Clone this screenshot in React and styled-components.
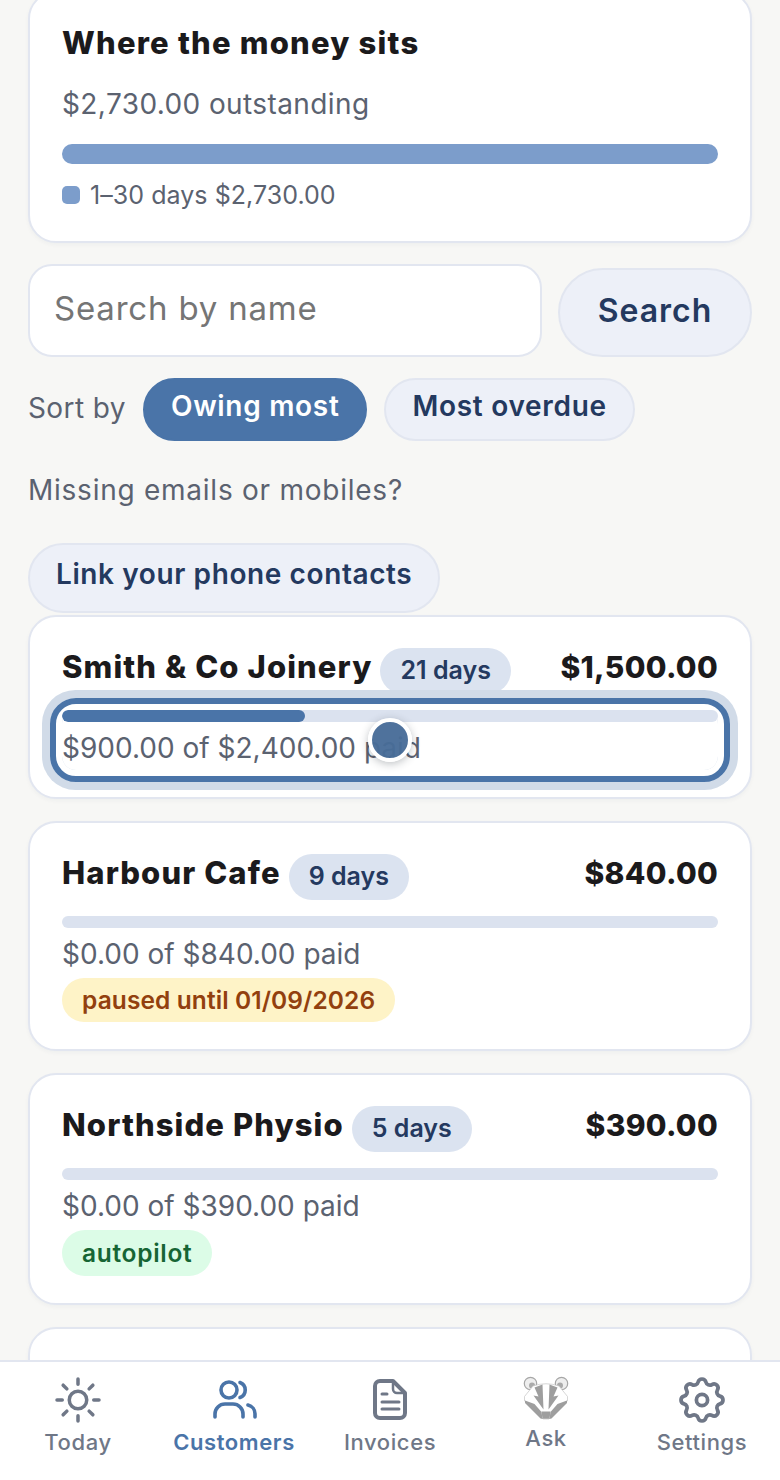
import React from "react";
import styled, { createGlobalStyle } from "styled-components";

const GlobalStyle = createGlobalStyle`
    html, body {
        margin: 0;
        padding: 0;
        background: #f7f7f5;
    }
    * {
        box-sizing: border-box;
    }
`;

const customers = [
    { name: "Smith & Co Joinery", days: "21 days", owing: "$1,500.00", paid: "$900.00 of $2,400.00 paid", pct: 37, focused: true },
    { name: "Harbour Cafe", days: "9 days", owing: "$840.00", paid: "$0.00 of $840.00 paid", tag: "paused until 01/09/2026", tone: "amber" },
    { name: "Northside Physio", days: "5 days", owing: "$390.00", paid: "$0.00 of $390.00 paid", tag: "autopilot", tone: "green" },
];

function SunIcon() {
    return (
        <svg width="56" height="56" viewBox="0 0 24 24" fill="none" stroke="currentColor" strokeWidth="1.5" strokeLinecap="round">
            <path d="M12 3v2.25m6.364.386-1.591 1.591M21 12h-2.25m-.386 6.364-1.591-1.591M12 18.75V21m-4.773-4.227-1.591 1.591M5.25 12H3m4.227-4.773L5.636 5.636M15.75 12a3.75 3.75 0 1 1-7.5 0 3.75 3.75 0 0 1 7.5 0Z" />
        </svg>
    );
}

function UsersIcon() {
    return (
        <svg width="56" height="56" viewBox="0 0 56 56" fill="none" stroke="currentColor" strokeWidth="3.6" strokeLinecap="round">
            <circle cx="23" cy="18" r="8" />
            <path d="M34 10.5a8 8 0 0 1 0 15" />
            <path d="M9 45v-3a10 10 0 0 1 10-10h8a10 10 0 0 1 10 10v3" />
            <path d="M42 33a9 9 0 0 1 7 9v3" />
        </svg>
    );
}

function DocIcon() {
    return (
        <svg width="56" height="56" viewBox="0 0 56 56" fill="none" stroke="currentColor" strokeWidth="4" strokeLinecap="round" strokeLinejoin="round">
            <path d="M18 9h13l12 12v20a5 5 0 0 1-5 5H18a5 5 0 0 1-5-5V14a5 5 0 0 1 5-5z" />
            <path d="M31 10v7a4 4 0 0 0 4 4h7" strokeWidth="2.5" />
            <path d="M20 22h5M20 30h17M20 37h17" strokeWidth="3" />
        </svg>
    );
}

function BadgerIcon() {
    return (
        <svg width="60" height="52" viewBox="0 0 60 52">
            <circle cx="14.500" cy="11.500" r="6.200" fill="#eee" stroke="#a6a6a6" strokeWidth="1.200" />
            <circle cx="45.500" cy="11.500" r="6.200" fill="#eee" stroke="#a6a6a6" strokeWidth="1.200" />
            <circle cx="16" cy="13.500" r="3" fill="#ababab" />
            <circle cx="44" cy="13.500" r="3" fill="#ababab" />
            <path d="M17 14Q30 9.500 43 14L51.500 24.500 51.500 29 33 47H27L8.500 29 8.500 24.500z" fill="#fff" stroke="#c4c4c4" strokeWidth="0.7" />
            <path d="M18.500 15.500 26.500 12.500 27.500 37.500 17.500 23.500 22.500 24.500z" fill="#9e9e9e" />
            <path d="M41.500 15.500 33.500 12.500 32.500 37.500 42.500 23.500 37.500 24.500z" fill="#9e9e9e" />
            <path d="M9 28.500 18.500 32 25.500 40 26.500 47 24.500 46.500 9 31z" fill="#9e9e9e" />
            <path d="M51 28.500 41.500 32 34.500 40 33.500 47 35.500 46.500 51 31z" fill="#9e9e9e" />
            <path d="M25.500 39.500H34.500L33.500 46.800H26.500z" fill="#9e9e9e" />
        </svg>
    );
}

function GearIcon() {
    return (
        <svg width="56" height="56" viewBox="0 0 24 24" fill="none" stroke="currentColor" strokeWidth="1.6" strokeLinecap="round" strokeLinejoin="round">
            <path d="M10.325 4.317c.426-1.756 2.924-1.756 3.35 0a1.724 1.724 0 002.573 1.066c1.543-.94 3.31.826 2.37 2.37a1.724 1.724 0 001.065 2.572c1.756.426 1.756 2.924 0 3.35a1.724 1.724 0 00-1.066 2.573c.94 1.543-.826 3.31-2.37 2.37a1.724 1.724 0 00-2.572 1.065c-.426 1.756-2.924 1.756-3.35 0a1.724 1.724 0 00-2.573-1.066c-1.543.94-3.31-.826-2.37-2.37a1.724 1.724 0 00-1.065-2.572c-1.756-.426-1.756-2.924 0-3.35a1.724 1.724 0 001.066-2.573c-.94-1.543.826-3.31 2.37-2.37.996.608 2.296.07 2.572-1.065z" />
            <circle cx="12" cy="12" r="2.4" />
        </svg>
    );
}

function CustomerCard({ customer }) {
    return (
        <Card>
            <NameRow>
                <NameGroup>
                    <Name>{customer.name}</Name>
                    <DaysPill>{customer.days}</DaysPill>
                </NameGroup>
                <Owing>{customer.owing}</Owing>
            </NameRow>
            <PaidBlock $focused={customer.focused}>
                <Track>
                    <Fill style={{ width: `${customer.pct || 0}%` }} />
                </Track>
                <PaidText>{customer.paid}</PaidText>
                {customer.focused && <TouchDot />}
            </PaidBlock>
            {customer.tag && <Tag $tone={customer.tone}>{customer.tag}</Tag>}
        </Card>
    );
}

function App() {
    return (
        <Page>
            <GlobalStyle />
            <Scroller>
                <Content>
                    <SummaryCard>
                        <Title>Where the money sits</Title>
                        <Outstanding>$2,730.00 outstanding</Outstanding>
                        <SummaryBar />
                        <Legend>
                            <LegendDot />
                            1–30 days $2,730.00
                        </Legend>
                    </SummaryCard>
                    <SearchRow>
                        <SearchInput placeholder="Search by name" />
                        <SearchButton>Search</SearchButton>
                    </SearchRow>
                    <SortRow>
                        <SortLabel>Sort by</SortLabel>
                        <SortChip $active>Owing most</SortChip>
                        <SortChip>Most overdue</SortChip>
                    </SortRow>
                    <Missing>Missing emails or mobiles?</Missing>
                    <LinkChip>Link your phone contacts</LinkChip>
                    <CardList>
                        {customers.map((c) => (
                            <CustomerCard key={c.name} customer={c} />
                        ))}
                        <EmptyCard />
                    </CardList>
                </Content>
            </Scroller>
            <Nav>
                <NavItem><SunIcon /><NavLabel>Today</NavLabel></NavItem>
                <NavItem $active><UsersIcon /><NavLabel $active>Customers</NavLabel></NavItem>
                <NavItem><DocIcon /><NavLabel>Invoices</NavLabel></NavItem>
                <NavItem><BadgerIcon /><NavLabel>Ask</NavLabel></NavItem>
                <NavItem><GearIcon /><NavLabel>Settings</NavLabel></NavItem>
            </Nav>
        </Page>
    );
}

export default App;

const Page = styled.div`
    width: 780px;
    height: 1480px;
    display: flex;
    flex-direction: column;
    overflow: hidden;
    background: #f7f7f5;
    font-family: "Inter", "Liberation Sans", sans-serif;
`;

const Scroller = styled.div`
    flex: 1;
    min-height: 0;
    overflow: hidden;
`;

const Content = styled.div`
    display: flex;
    flex-direction: column;
    align-items: flex-start;
    padding: 0 28px;
    margin-top: -9px;
`;

const Card = styled.div`
    width: 100%;
    background: #fff;
    border: 2px solid #e2e6f0;
    border-radius: 28px;
    padding: 31px 32px 27px;
    box-shadow: 0 2px 4px rgba(30, 40, 70, 0.04);
`;

const SummaryCard = styled(Card)`
    height: 252px;
`;

const EmptyCard = styled(Card)`
    height: 120px;
    flex-shrink: 0;
`;

const Title = styled.h2`
    margin: 0;
    height: 38px;
    line-height: 38px;
    font-size: 31px;
    font-weight: 800;
    letter-spacing: 1.2px;
    color: #1b1a1c;
`;

const Outstanding = styled.div`
    margin-top: 20px;
    height: 44px;
    line-height: 44px;
    font-size: 28px;
    font-weight: 400;
    letter-spacing: 0.4px;
    color: #5b6270;
`;

const SummaryBar = styled.div`
    margin-top: 18px;
    height: 20px;
    border-radius: 10px;
    background: #7c9dcb;
`;

const Legend = styled.div`
    margin-top: 11px;
    height: 40px;
    display: flex;
    align-items: center;
    gap: 10px;
    font-size: 25px;
    letter-spacing: 0.05px;
    color: #5b6270;
`;

const LegendDot = styled.span`
    width: 18px;
    height: 18px;
    border-radius: 5px;
    background: #7c9dcb;
`;

const SearchRow = styled.div`
    width: 100%;
    margin-top: 21px;
    display: flex;
    align-items: flex-end;
    gap: 16px;
`;

const SearchInput = styled.input`
    flex: 1;
    min-width: 0;
    height: 93px;
    padding: 0 24px 6px;
    background: #fff;
    border: 2px solid #e2e6f0;
    border-radius: 24px;
    font-family: inherit;
    font-size: 33px;
    letter-spacing: 0.8px;
    color: #1b1a1c;
    &::placeholder {
        color: #757575;
        opacity: 1;
    }
`;

const SearchButton = styled.button`
    width: 194px;
    height: 89px;
    padding: 0 0 4px;
    background: #edf0f8;
    border: 2px solid #e2e6f0;
    border-radius: 45px;
    font-family: inherit;
    font-size: 32px;
    font-weight: 600;
    letter-spacing: 1px;
    color: #24395f;
`;

const SortRow = styled.div`
    margin-top: 21px;
    display: flex;
    align-items: center;
    gap: 17px;
`;

const SortLabel = styled.span`
    padding-bottom: 4px;
    font-size: 28px;
    letter-spacing: 0.4px;
    color: #5b6270;
`;

const SortChip = styled.button`
    height: 63px;
    padding: 0 26px 7px;
    border-radius: 32px;
    border: 2px solid ${(p) => (p.$active ? "#4a74a8" : "#e2e6f0")};
    background: ${(p) => (p.$active ? "#4a74a8" : "#edf0f8")};
    color: ${(p) => (p.$active ? "#fff" : "#24395f")};
    font-family: inherit;
    font-size: 28px;
    font-weight: 600;
    letter-spacing: 0.7px;
`;

const Missing = styled.p`
    margin: 27px 0 0;
    height: 44px;
    line-height: 44px;
    font-size: 28px;
    letter-spacing: 0.75px;
    color: #5b6270;
`;

const LinkChip = styled.button`
    margin-top: 31px;
    height: 70px;
    padding: 0 26px 8px;
    background: #edf0f8;
    border: 2px solid #e2e6f0;
    border-radius: 36px;
    font-family: inherit;
    font-size: 28px;
    font-weight: 600;
    letter-spacing: 0.6px;
    color: #24395f;
`;

const CardList = styled.div`
    width: 100%;
    margin-top: 2px;
    display: flex;
    flex-direction: column;
    gap: 22px;
`;

const NameRow = styled.div`
    display: flex;
    align-items: center;
    justify-content: space-between;
    height: 46px;
`;

const NameGroup = styled.div`
    display: flex;
    align-items: center;
    gap: 8px;
`;

const Name = styled.span`
    padding-bottom: 8px;
    line-height: 36px;
    font-size: 31px;
    font-weight: 800;
    letter-spacing: 1.1px;
    color: #1b1a1c;
`;

const DaysPill = styled.span`
    height: 46px;
    padding: 0 20px 2px;
    display: flex;
    align-items: center;
    border-radius: 23px;
    background: #dbe3f0;
    font-size: 25px;
    font-weight: 600;
    color: #24395f;
`;

const Owing = styled.span`
    padding-bottom: 8px;
    line-height: 36px;
    font-size: 30px;
    font-weight: 800;
    letter-spacing: 0.3px;
    color: #1b1a1c;
`;

const PaidBlock = styled.div`
    position: relative;
    height: 60px;
    margin-top: 16px;
    ${(p) =>
        p.$focused &&
        `
        border-radius: 14px;
        outline: 6px solid #4a74a8;
        outline-offset: 6px;
        box-shadow: 0 0 0 12px #fff, 0 0 0 20px #d1dbe8;
    `}
`;

const Track = styled.div`
    height: 12px;
    border-radius: 6px;
    background: #dbe2ef;
    overflow: hidden;
`;

const Fill = styled.div`
    height: 100%;
    border-radius: 6px;
    background: #4a74a8;
`;

const PaidText = styled.div`
    margin-top: 8px;
    height: 36px;
    line-height: 36px;
    font-size: 28px;
    color: #5b6270;
`;

const TouchDot = styled.span`
    position: absolute;
    left: 50%;
    top: 8px;
    width: 44px;
    height: 44px;
    margin-left: -22px;
    border-radius: 50%;
    border: 4px solid #fff;
    background: rgba(72, 108, 152, 0.96);
    box-shadow: 0 2px 8px rgba(40, 50, 60, 0.3);
`;

const Tag = styled.div`
    display: flex;
    align-items: center;
    width: fit-content;
    margin-top: 2px;
    height: ${(p) => (p.$tone === "green" ? "46px" : "44px")};
    padding: 0 20px;
    border-radius: 23px;
    background: ${(p) => (p.$tone === "green" ? "#dcfce7" : "#fef3c7")};
    color: ${(p) => (p.$tone === "green" ? "#166534" : "#92400e")};
    font-size: 24.5px;
    font-weight: 600;
    letter-spacing: ${(p) => (p.$tone === "green" ? "0.7px" : "0.1px")};
`;

const Nav = styled.nav`
    flex-shrink: 0;
    height: 120px;
    background: #fff;
    border-top: 2px solid #e2e6f0;
    display: grid;
    grid-template-columns: repeat(5, 1fr);
    padding-top: 10px;
`;

const NavItem = styled.div`
    display: flex;
    flex-direction: column;
    align-items: center;
    color: ${(p) => (p.$active ? "#4a74a8" : "#6f7787")};
    svg {
        display: block;
    }
`;

const NavLabel = styled.span`
    margin-top: -1px;
    font-size: 22px;
    line-height: 30px;
    letter-spacing: 0.6px;
    font-weight: ${(p) => (p.$active ? 600 : 500)};
`;
